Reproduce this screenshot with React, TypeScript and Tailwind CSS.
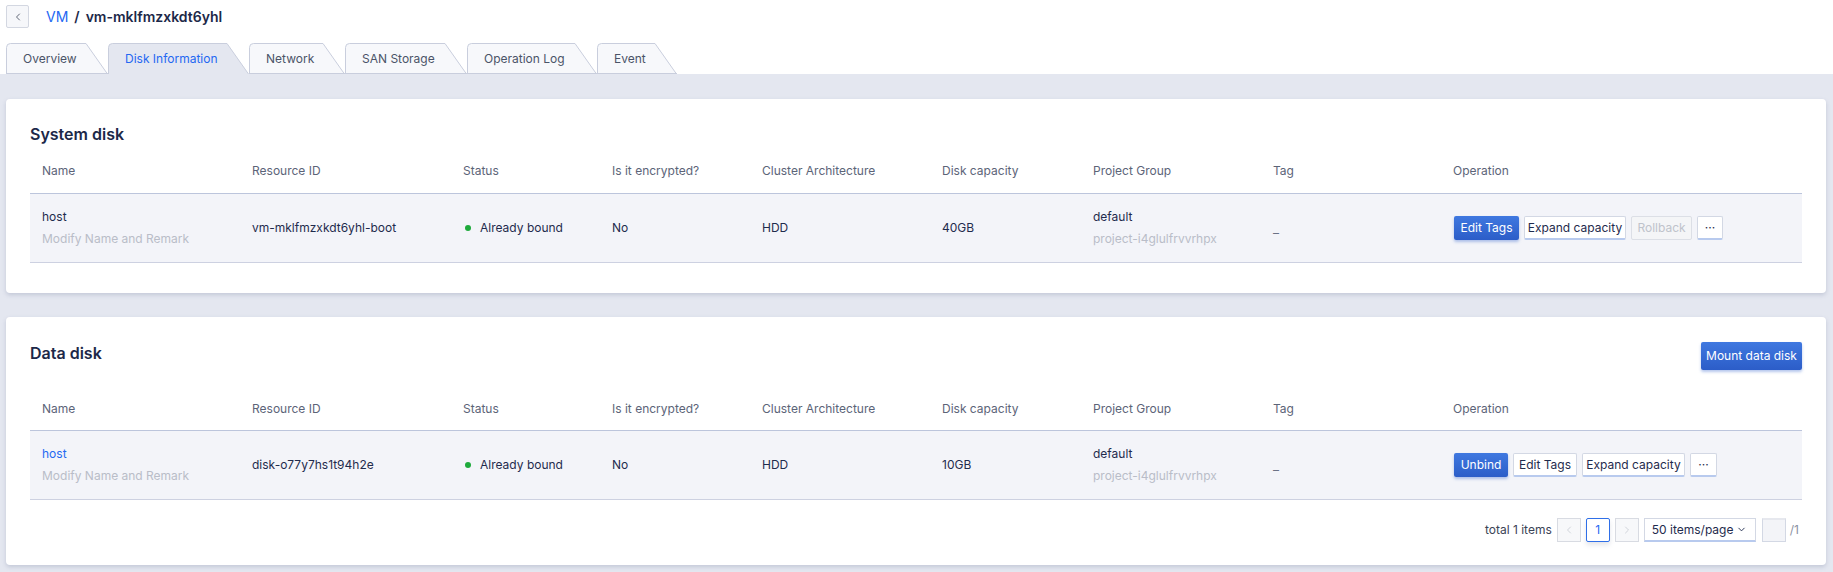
import React from "react";
import { ChevronLeft, ChevronRight, ChevronDown } from "lucide-react";

type TabItem = { label: string; w: number; cls: string; active?: boolean };

const tabs: TabItem[] = [
  { label: "Overview", w: 102, cls: "w-[102px]" },
  { label: "Disk Information", w: 141, cls: "w-[141px]", active: true },
  { label: "Network", w: 96, cls: "w-[96px]" },
  { label: "SAN Storage", w: 122, cls: "w-[122px]" },
  { label: "Operation Log", w: 130, cls: "w-[130px]" },
  { label: "Event", w: 80, cls: "w-[80px]" },
];

const columns = [
  "Name",
  "Resource ID",
  "Status",
  "Is it encrypted?",
  "Cluster Architecture",
  "Disk capacity",
  "Project Group",
  "Tag",
  "Operation",
];

const gridCols =
  "grid grid-cols-[210px_211px_149px_150px_180px_151px_180px_180px_1fr]";

type Disk = {
  name: string;
  nameLink?: boolean;
  resourceId: string;
  capacity: string;
  ops: { label: string; kind: "primary" | "default" | "disabled"; cls: string }[];
};

function Tab({ tab }: { tab: TabItem }) {
  const w = tab.w;
  return (
    <div className={`relative h-[31px] flex items-center pl-[17px] ${tab.cls}`}>
      <svg className="absolute inset-0" width={w} height={31}>
        <path
          d={`M0.5 31 V4.5 Q0.5 0.5 4.5 0.5 H${w - 22} L${w - 0.5} 31`}
          fill={tab.active ? "#e4e7f0" : "#f7f8fb"}
          stroke="#c9cedd"
          strokeWidth={1}
        />
        {!tab.active && (
          <line x1={0} y1={30.5} x2={w} y2={30.5} stroke="#c9cedd" strokeWidth={1} />
        )}
      </svg>
      <span
        className={`relative text-[12px] leading-none ${
          tab.active ? "text-[#2468f2]" : "text-[#4b5468]"
        }`}
      >
        {tab.label}
      </span>
    </div>
  );
}

function OpButton({ label, kind, cls }: { label: string; kind: string; cls: string }) {
  if (kind === "primary") {
    return (
      <button
        className={`h-[24px] rounded-[2px] bg-gradient-to-b from-[#3f78e0] to-[#2c5dc8] text-white text-[12px] whitespace-nowrap shadow-[0_2px_3px_rgba(44,93,200,0.35)] ${cls}`}
      >
        {label}
      </button>
    );
  }
  if (kind === "disabled") {
    return (
      <button
        className={`h-[24px] rounded-[2px] bg-[#f4f5f7] border border-[#dcdfe6] text-[#bfc3cb] text-[12px] whitespace-nowrap ${cls}`}
      >
        {label}
      </button>
    );
  }
  return (
    <button
      className={`h-[24px] rounded-[2px] bg-white border border-[#d3d8e4] border-b-2 border-b-[#b8caee] text-[#1f2b4d] text-[12px] whitespace-nowrap ${cls}`}
    >
      {label}
    </button>
  );
}

function DiskRow({ disk }: { disk: Disk }) {
  return (
    <div
      className={`${gridCols} h-[69px] bg-[#f3f4f9] border-b border-[#cdd1e1] text-[12px] text-[#1f2b4d] items-center`}
    >
      <div className="pl-[12px] flex flex-col gap-[8px]">
        <span className={`leading-[14px] ${disk.nameLink ? "text-[#2468f2]" : ""}`}>
          {disk.name}
        </span>
        <span className="leading-[14px] text-[#b9bdc8]">Modify Name and Remark</span>
      </div>
      <div className="pl-[12px]">{disk.resourceId}</div>
      <div className="pl-[12px] flex items-center">
        <span className="ml-[2px] w-[6px] h-[6px] rounded-full bg-[#1eaa3c]" />
        <span className="ml-[9px]">Already bound</span>
      </div>
      <div className="pl-[12px]">No</div>
      <div className="pl-[12px]">HDD</div>
      <div className="pl-[12px]">{disk.capacity}</div>
      <div className="pl-[12px] flex flex-col gap-[8px]">
        <span className="leading-[14px]">default</span>
        <span className="leading-[14px] text-[#b9bdc8]">project-i4glulfrvvrhpx</span>
      </div>
      <div className="pl-[12px] pt-[10px] text-[#6b7285]">–</div>
      <div className="pl-[13px] flex items-center gap-[5px]">
        {disk.ops.map((o) => (
          <OpButton key={o.label} {...o} />
        ))}
      </div>
    </div>
  );
}

function HeaderRow({ cls }: { cls: string }) {
  return (
    <div
      className={`${gridCols} ${cls} border-b border-[#bcc5dc] items-center text-[12px] text-[#5c6478]`}
    >
      {columns.map((c) => (
        <div key={c} className="pl-[12px]">
          {c}
        </div>
      ))}
    </div>
  );
}

const systemDisk: Disk = {
  name: "host",
  resourceId: "vm-mklfmzxkdt6yhl-boot",
  capacity: "40GB",
  ops: [
    { label: "Edit Tags", kind: "primary", cls: "w-[65px]" },
    { label: "Expand capacity", kind: "default", cls: "w-[102px]" },
    { label: "Rollback", kind: "disabled", cls: "w-[61px]" },
    { label: "···", kind: "default", cls: "w-[26px]" },
  ],
};

const dataDisk: Disk = {
  name: "host",
  nameLink: true,
  resourceId: "disk-o77y7hs1t94h2e",
  capacity: "10GB",
  ops: [
    { label: "Unbind", kind: "primary", cls: "w-[54px]" },
    { label: "Edit Tags", kind: "default", cls: "w-[64px]" },
    { label: "Expand capacity", kind: "default", cls: "w-[103px]" },
    { label: "···", kind: "default", cls: "w-[27px]" },
  ],
};

export default function App() {
  return (
    <div className="w-full min-h-[572px] bg-white font-['Inter','Liberation_Sans',sans-serif]">
      {/* breadcrumb */}
      <div className="h-[43px] flex items-start pt-[5px] pl-[6px]">
        <button className="w-[23px] h-[23px] flex items-center justify-center border border-[#d3d7e1] bg-[#f6f7fa] rounded-[2px] text-[#3b4356]">
          <ChevronLeft size={12} strokeWidth={1.6} />
        </button>
        <div className="ml-[17px] h-[23px] flex items-center text-[14px]">
          <span className="text-[#2468f2]">VM</span>
          <span className="mx-[6px] font-semibold text-[#1c2848]">/</span>
          <span className="font-semibold text-[#1c2848]">vm-mklfmzxkdt6yhl</span>
        </div>
      </div>

      {/* tabs */}
      <div className="flex pl-[6px] h-[31px]">
        {tabs.map((t) => (
          <Tab key={t.label} tab={t} />
        ))}
      </div>

      {/* content */}
      <div className="bg-[#e4e7f0] pt-[25px] pl-[6px] pr-[7px] pb-[7px] flex flex-col gap-[24px]">
        <div className="bg-white rounded-[4px] shadow-[0_2px_4px_rgba(120,130,160,0.3)] px-[24px] pt-[24px] pb-[30px]">
          <h2 className="h-[22px] leading-[22px] text-[16px] font-semibold text-[#1c2848]">
            System disk
          </h2>
          <HeaderRow cls="h-[49px] pt-[4px]" />
          <DiskRow disk={systemDisk} />
        </div>

        <div className="bg-white rounded-[4px] shadow-[0_2px_4px_rgba(120,130,160,0.3)] px-[24px] pt-[24px] pb-[23px]">
          <div className="flex justify-between items-start h-[29px]">
            <h2 className="leading-[24px] text-[16px] font-semibold text-[#1c2848]">Data disk</h2>
            <button className="mt-[1px] h-[28px] w-[101px] rounded-[2px] bg-gradient-to-b from-[#3f78e0] to-[#2c5dc8] text-white text-[12px] whitespace-nowrap shadow-[0_2px_3px_rgba(44,93,200,0.35)]">
              Mount data disk
            </button>
          </div>
          <HeaderRow cls="mt-[17px] h-[44px]" />
          <DiskRow disk={dataDisk} />

          {/* pagination */}
          <div className="mt-[18px] h-[24px] flex items-center justify-end pr-[3px] text-[12px]">
            <span className="text-[#3b4356] mr-[5px]">total 1 items</span>
            <button className="w-[24px] h-[24px] flex items-center justify-center border border-[#d8dbe2] bg-[#f7f8fa] text-[#c3c7cf]">
              <ChevronLeft size={12} strokeWidth={1.5} />
            </button>
            <button className="ml-[5px] w-[24px] h-[24px] flex items-center justify-center border border-[#2f6fe8] bg-white text-[#2468f2] rounded-[2px] shadow-[0_3px_5px_rgba(100,110,140,0.18)]">
              1
            </button>
            <button className="ml-[5px] w-[24px] h-[24px] flex items-center justify-center border border-[#d8dbe2] bg-[#f7f8fa] text-[#c3c7cf]">
              <ChevronRight size={12} strokeWidth={1.5} />
            </button>
            <div className="ml-[5px] w-[112px] h-[24px] flex items-center justify-between pl-[7px] pr-[8px] bg-white border border-[#d3d8e4] border-b-2 border-b-[#b8caee] text-[#1f2b4d] whitespace-nowrap">
              <span>50 items/page</span>
              <ChevronDown size={11} strokeWidth={2} />
            </div>
            <div className="ml-[6px] w-[24px] h-[24px] bg-[#f3f4f8] border border-[#d3d8e4] border-t-2 border-t-[#e6e8ee]" />
            <span className="ml-[4px] text-[#8a91a2]">/1</span>
          </div>
        </div>
      </div>
    </div>
  );
}
